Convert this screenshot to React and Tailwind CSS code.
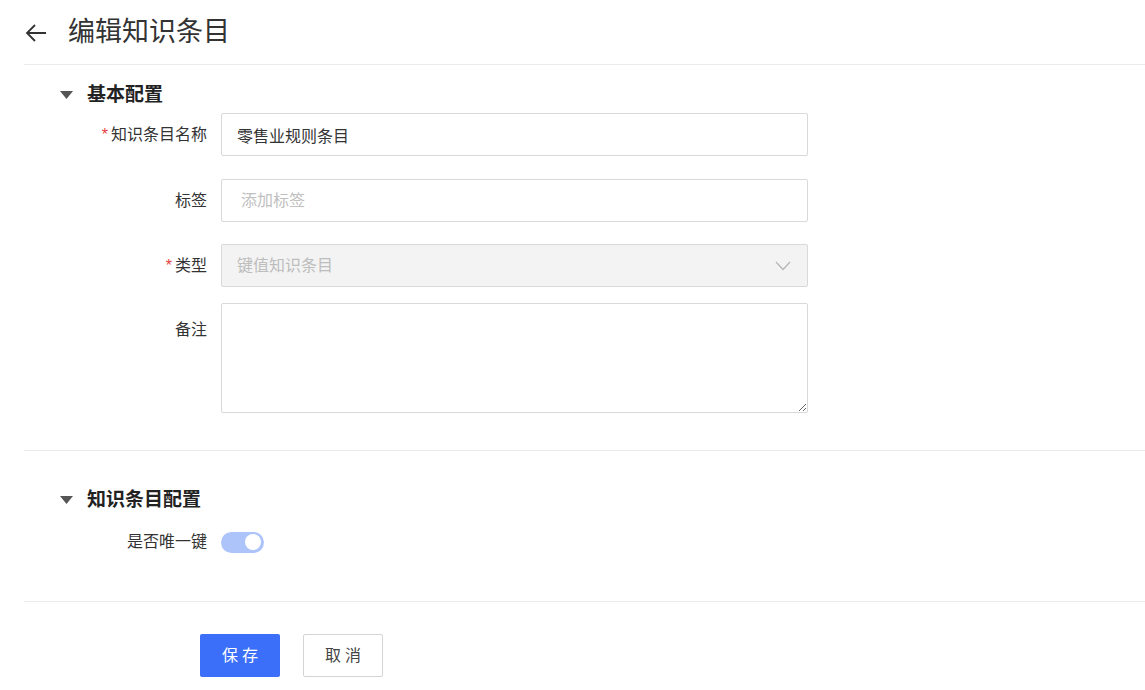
import React, { useState } from 'react';

const font = { fontFamily: '"Liberation Sans", "Noto Sans CJK SC", sans-serif' };

const SectionTitle = ({ children }) => (
    <div className="flex items-center h-[28px] pl-[60px]">
        <svg width="13" height="8" viewBox="0 0 13 8" className="mr-[14px]">
            <path d="M0 0 L13 0 L6.5 8 Z" fill="#555" />
        </svg>
        <span className="text-[19px] font-bold text-[#222]">{children}</span>
    </div>
);

const Row = ({ label, required, top, children }) => (
    <div className={`flex ${top ? 'items-start' : 'items-center'}`}>
        <div className={`w-[207px] flex items-center justify-end text-[16px] text-[#333] ${top ? 'pt-[15px]' : ''}`}>
            {required && <span className="text-[#e83d3d] mr-[3px] text-[16px]">*</span>}
            {label}
        </div>
        <div className="ml-[14px] w-[587px]">{children}</div>
    </div>
);

const App = () => {
    const [unique, setUnique] = useState(true);

    return (
        <div className="w-[1145px] h-[690px] bg-white overflow-hidden" style={font}>
            <div className="flex items-center h-[65px] pt-[2px] ml-[24px] border-b border-[#ebebeb]">
                <svg width="22" height="20" viewBox="0 0 22 20" className="ml-[1px]">
                    <path d="M21 10 H2 M10 2 L2 10 L10 18" fill="none" stroke="#333" strokeWidth="1.8" />
                </svg>
                <h1 className="ml-[21px] text-[27px] text-[#333] font-normal -mt-[1px]">编辑知识条目</h1>
            </div>

            <div className="pt-[16px]">
                <SectionTitle>基本配置</SectionTitle>
                <div className="flex flex-col mt-[4px]">
                    <Row label="知识条目名称" required>
                        <input
                            className="w-full h-[43px] border border-[#d9d9d9] rounded-[2px] px-[15px] text-[16px] text-[#333] outline-none"
                            defaultValue="零售业规则条目"
                        />
                    </Row>
                    <div className="mt-[23px]">
                        <Row label="标签">
                            <input
                                className="w-full h-[43px] border border-[#d9d9d9] rounded-[2px] px-[19px] text-[16px] text-[#333] outline-none placeholder:text-[#c0c0c0]"
                                placeholder="添加标签"
                            />
                        </Row>
                    </div>
                    <div className="mt-[22px]">
                        <Row label="类型" required>
                            <div className="w-full h-[43px] border border-[#d9d9d9] rounded-[2px] bg-[#f3f3f3] px-[15px] flex items-center justify-between">
                                <span className="text-[16px] text-[#bdbdbd]">键值知识条目</span>
                                <svg width="16" height="10" viewBox="0 0 16 10" className="mr-[1px]">
                                    <path d="M1 1 L8 8.5 L15 1" fill="none" stroke="#b5b5b5" strokeWidth="1.2" />
                                </svg>
                            </div>
                        </Row>
                    </div>
                </div>
                <div className="mt-[16px]">
                    <Row label="备注" top>
                        <textarea className="block w-full h-[110px] border border-[#d9d9d9] rounded-[2px] px-[15px] py-[8px] text-[16px] outline-none" />
                    </Row>
                </div>
            </div>

            <div className="ml-[24px] mt-[37px] border-b border-[#ebebeb]" />

            <div className="pt-[35px]">
                <SectionTitle>知识条目配置</SectionTitle>
                <div className="flex items-center mt-[16px]">
                    <div className="w-[207px] text-right text-[16px] text-[#333]">是否唯一键</div>
                    <button
                        onClick={() => setUnique(!unique)}
                        className={`ml-[14px] w-[43px] h-[21px] rounded-full flex items-center px-[3px] ${unique ? 'bg-[#adc4fb] justify-end' : 'bg-[#d9d9d9] justify-start'}`}
                    >
                        <span className="w-[16px] h-[16px] rounded-full bg-white" />
                    </button>
                </div>
            </div>

            <div className="ml-[24px] mt-[47px] border-b border-[#ebebeb]" />

            <div className="flex gap-[23px] pl-[200px] pt-[32px]">
                <button className="w-[80px] h-[43px] rounded-[2px] bg-[#3b6ff9] text-white text-[16px] tracking-[4px] pl-[4px]">
                    保存
                </button>
                <button className="w-[80px] h-[43px] rounded-[2px] border border-[#d4d4d4] bg-white text-[#444] text-[16px] tracking-[4px] pl-[4px]">
                    取消
                </button>
            </div>
        </div>
    );
};

export default App;
